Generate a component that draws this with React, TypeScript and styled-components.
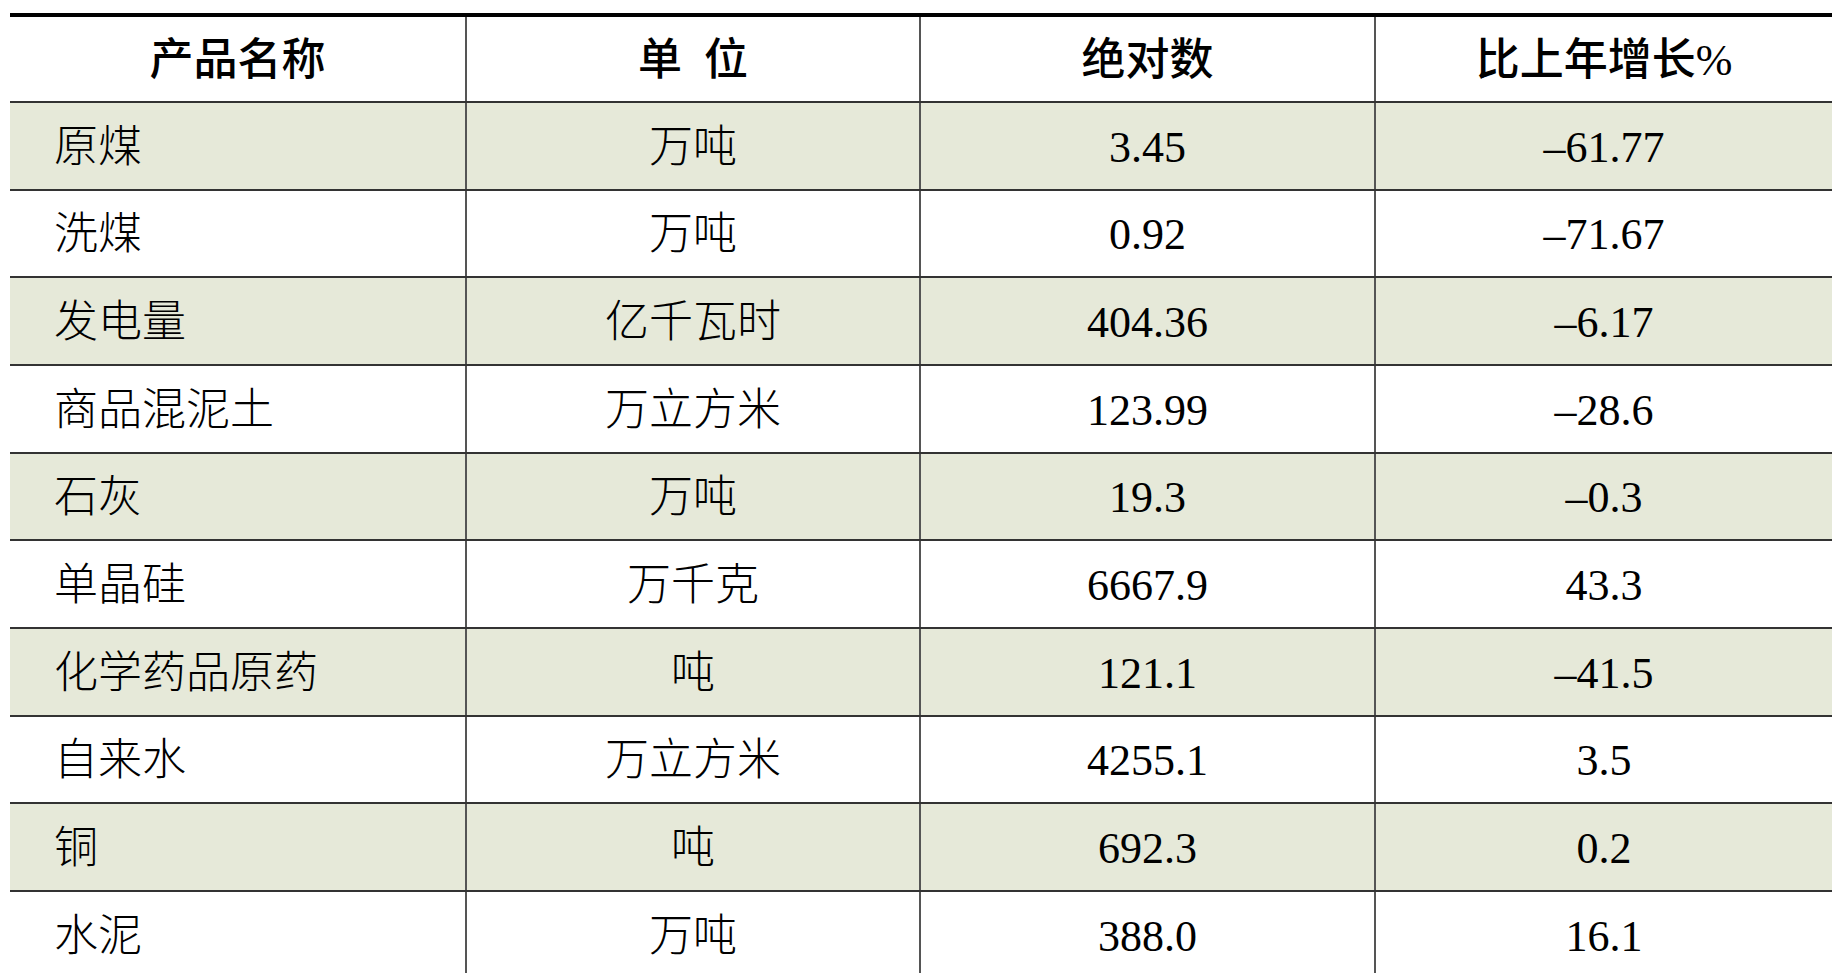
import React from "react";
import styled, { createGlobalStyle } from "styled-components";

const GlobalStyle = createGlobalStyle`
  html, body {
    margin: 0;
    padding: 0;
    background: #ffffff;
    overflow: hidden;
  }
  body {
    font-family: "Liberation Serif", "Noto Sans CJK SC", serif;
  }
`;

const Page = styled.div`
  padding: 13px 0 0 10px;
  width: 1822px;
  height: 960px;
  overflow: hidden;
`;

const Table = styled.div`
  display: flex;
  flex-direction: column;
  border-top: 4px solid #000000;
`;

const Row = styled.div<{ $shaded?: boolean; $header?: boolean }>`
  display: grid;
  grid-template-columns: 455px 454px 455px 1fr;
  box-sizing: border-box;
  height: ${(p) => (p.$header ? "86px" : "87.67px")};
  background: ${(p) => (p.$shaded ? "#e6e9d9" : "#ffffff")};
  border-bottom: 2px solid #333333;
  flex-shrink: 0;
`;

const Cell = styled.div<{ $align?: "left" | "center"; $header?: boolean }>`
  display: flex;
  align-items: center;
  justify-content: ${(p) => (p.$align === "left" ? "flex-start" : "center")};
  padding-left: ${(p) => (p.$align === "left" ? "44px" : "0")};
  padding-top: 4px;
  font-size: 44px;
  line-height: 1;
  color: #000000;
  white-space: pre;
  font-family: "Liberation Serif", "Noto Sans CJK SC", serif;
  font-weight: ${(p) => (p.$header ? 500 : 300)};
  & + & {
    border-left: 2px solid #555555;
  }
`;

const Num = styled.span`
  font-family: "Liberation Serif", "Times New Roman", serif;
  font-weight: 400;
`;

type Item = { name: string; unit: string; value: string; change: string };

const data: Item[] = [
  { name: "原煤", unit: "万吨", value: "3.45", change: "\u201361.77" },
  { name: "洗煤", unit: "万吨", value: "0.92", change: "\u201371.67" },
  { name: "发电量", unit: "亿千瓦时", value: "404.36", change: "\u20136.17" },
  { name: "商品混泥土", unit: "万立方米", value: "123.99", change: "\u201328.6" },
  { name: "石灰", unit: "万吨", value: "19.3", change: "\u20130.3" },
  { name: "单晶硅", unit: "万千克", value: "6667.9", change: "43.3" },
  { name: "化学药品原药", unit: "吨", value: "121.1", change: "\u201341.5" },
  { name: "自来水", unit: "万立方米", value: "4255.1", change: "3.5" },
  { name: "铜", unit: "吨", value: "692.3", change: "0.2" },
  { name: "水泥", unit: "万吨", value: "388.0", change: "16.1" },
];

export default function App() {
  return (
    <>
      <GlobalStyle />
      <Page>
        <Table>
          <Row $header>
            <Cell $header>产品名称</Cell>
            <Cell $header>{"单  位"}</Cell>
            <Cell $header>绝对数</Cell>
            <Cell $header>
              比上年增长<Num>%</Num>
            </Cell>
          </Row>
          {data.map((d, i) => (
            <Row key={d.name} $shaded={i % 2 === 0}>
              <Cell $align="left">{d.name}</Cell>
              <Cell>{d.unit}</Cell>
              <Cell>
                <Num>{d.value}</Num>
              </Cell>
              <Cell>
                <Num>{d.change}</Num>
              </Cell>
            </Row>
          ))}
        </Table>
      </Page>
    </>
  );
}
